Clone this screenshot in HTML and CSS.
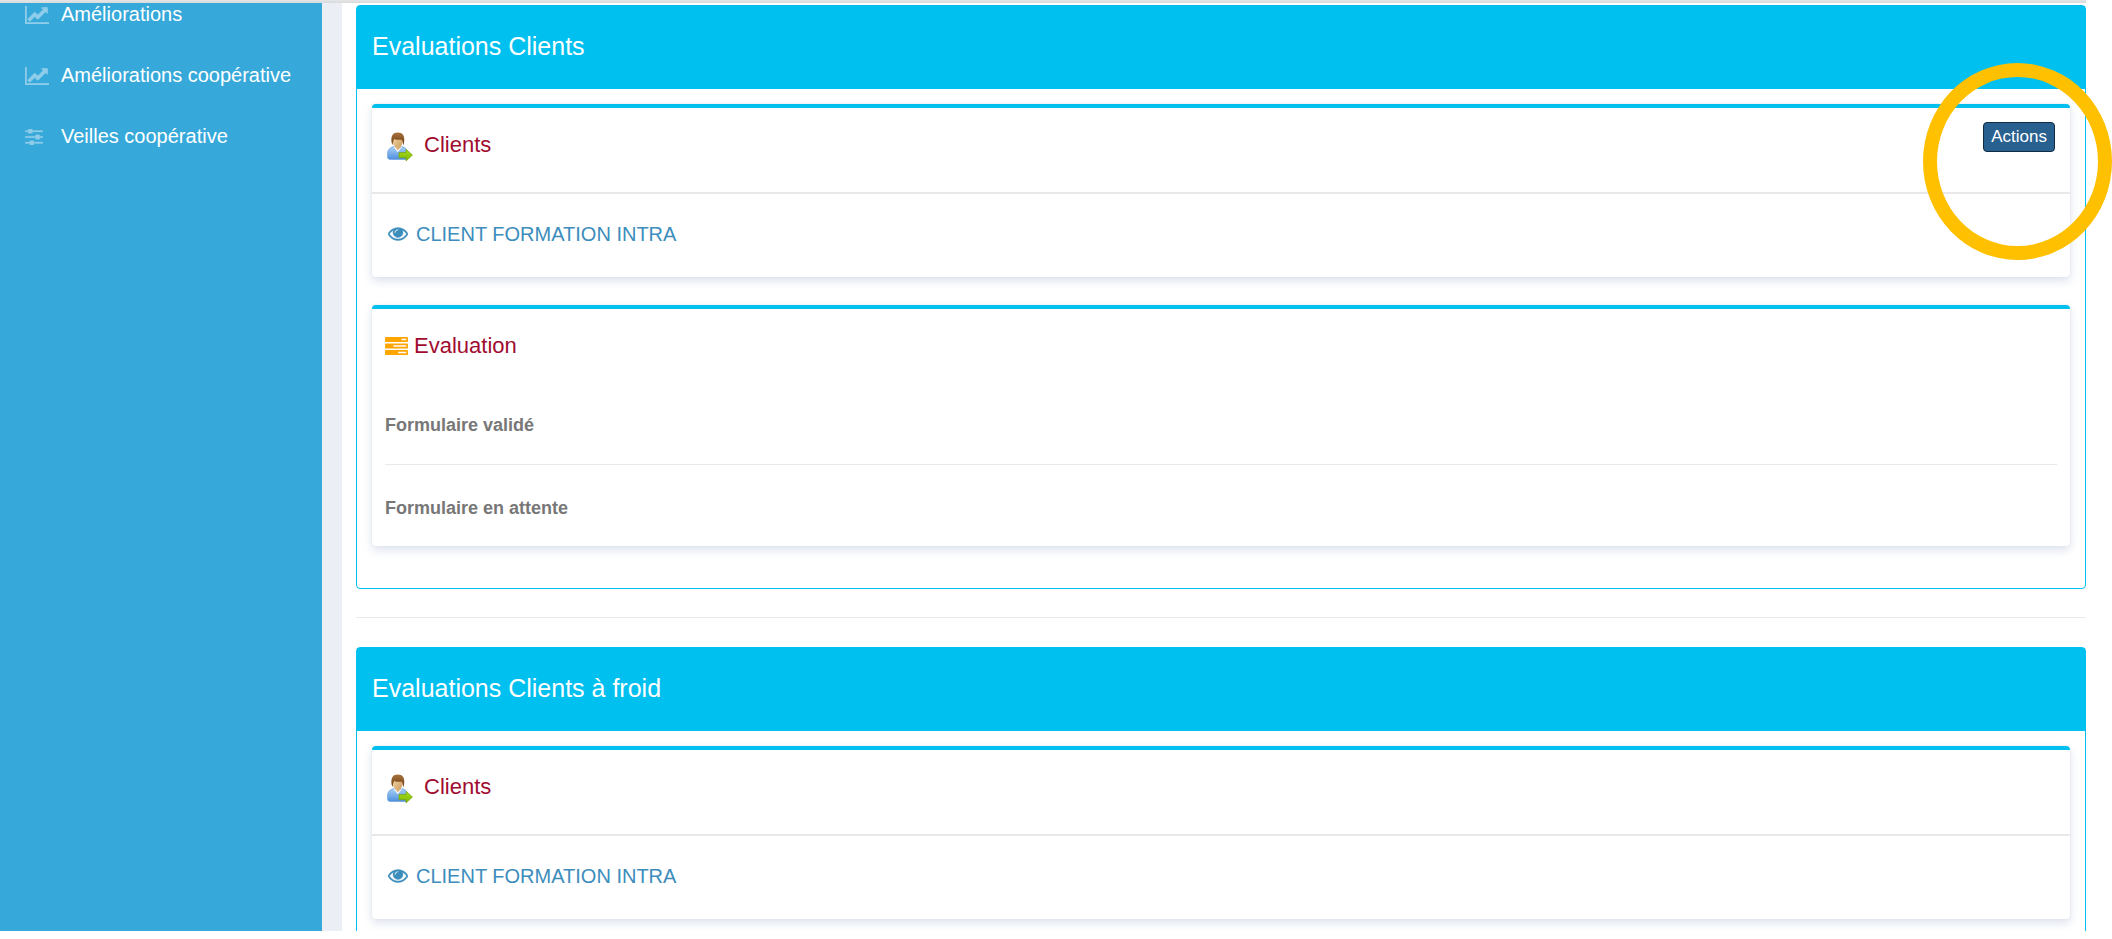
FILE: index.html
```
<!DOCTYPE html>
<html lang="fr">

<head>
    <title>Evaluations Clients</title>
    <meta charset="UTF-8">
    <meta name="viewport" content="width=device-width, initial-scale=1">

    <link rel="stylesheet" href="styles.css">
</head>

<body>
    <!-- Shared icons -->
    <svg class="sprite" aria-hidden="true">
        <defs>
            <linearGradient id="hair" x1="0" y1="0" x2="0" y2="1">
                <stop offset="0" stop-color="#a8713c" />
                <stop offset="1" stop-color="#6b3d12" />
            </linearGradient>
            <linearGradient id="skin" x1="0" y1="0" x2="1" y2="1">
                <stop offset="0" stop-color="#f6dcae" />
                <stop offset="1" stop-color="#c99a5c" />
            </linearGradient>
            <linearGradient id="shirt" x1="0" y1="0" x2="0" y2="1">
                <stop offset="0" stop-color="#a9d0f7" />
                <stop offset="1" stop-color="#4f8fdc" />
            </linearGradient>
            <linearGradient id="arrow" x1="0" y1="0" x2="0" y2="1">
                <stop offset="0" stop-color="#a6dc1e" />
                <stop offset="1" stop-color="#7fb800" />
            </linearGradient>
        </defs>
        <symbol id="icon-chart" viewBox="0 128 2048 1536">
            <path stroke="currentColor" stroke-width="50" d="M2048 1536v128h-2048v-1536h128v1408h1920zM1920 288v435q0 21-19.500 29.500t-35.500-7.500l-121-121-633 633q-10 10-23 10t-23-10l-233-233-416 416-192-192 585-585q10-10 23-10t23 10l233 233 464-464-121-121q-16-16-7.500-35.500t29.500-19.500h435q14 0 23 9t9 23z" />
        </symbol>
        <symbol id="icon-sliders" viewBox="0 256 1536 1408">
            <path stroke="currentColor" stroke-width="30" d="M352 1408v128h-352v-128h352zm352-128q26 0 45 19t19 45v256q0 26-19 45t-45 19h-256q-26 0-45-19t-19-45v-256q0-26 19-45t45-19h256zm160-384v128h-864v-128h864zm-640-512v128h-224v-128h224zm1312 1024v128h-736v-128h736zm-960-1152q26 0 45 19t19 45v256q0 26-19 45t-45 19h-256q-26 0-45-19t-19-45v-256q0-26 19-45t45-19h256zm640 512q26 0 45 19t19 45v256q0 26-19 45t-45 19h-256q-26 0-45-19t-19-45v-256q0-26 19-45t45-19h256zm320 128v128h-224v-128h224zm0-512v128h-864v-128h864z" />
        </symbol>
        <symbol id="icon-eye" viewBox="0 384 1792 1152">
            <path stroke="currentColor" stroke-width="36" d="M1664 960q-152-236-381-353 61 104 61 225 0 185-131.500 316.500t-316.500 131.500-316.500-131.500-131.500-316.500q0-121 61-225-229 117-381 353 133 205 333.500 326.500t434.500 121.500 434.500-121.500 333.500-326.500zm-720-384q0-20-14-34t-34-14q-125 0-214.500 89.500t-89.500 214.500q0 20 14 34t34 14 34-14 14-34q0-86 61-147t147-61q20 0 34-14t14-34zm848 384q0 34-20 69-140 230-376.500 368.500t-499.500 138.500-499.500-139-376.500-368q-20-35-20-69t20-69q140-229 376.500-368t499.500-139 499.500 139 376.500 368q20 35 20 69z" />
        </symbol>
        <symbol id="icon-tasks" viewBox="0 128 1792 1408">
            <path d="M1024 1408h640v-128h-640v128zm-384-512h1024v-128h-1024v128zm640-512h384v-128h-384v128zm512 832v256q0 26-19 45t-45 19h-1664q-26 0-45-19t-19-45v-256q0-26 19-45t45-19h1664q26 0 45 19t19 45zm0-512v256q0 26-19 45t-45 19h-1664q-26 0-45-19t-19-45v-256q0-26 19-45t45-19h1664q26 0 45 19t19 45zm0-512v256q0 26-19 45t-45 19h-1664q-26 0-45-19t-19-45v-256q0-26 19-45t45-19h1664q26 0 45 19t19 45z" />
        </symbol>
        <symbol id="icon-client" viewBox="0 -4 26 34">
            <path fill="url(#shirt)" stroke="#5b96dc" stroke-width=".6" d="M.6 25v-3.500c0-4 2.600-6.200 6.400-6.900h7.500c4 .7 6.200 3 6.200 6.900V25c0 1.600-.9 2.400-2.500 2.400H3.200C1.500 27.400.6 26.600.6 25z" />
            <path fill="#fff" d="M6.500 14.800l4.300 5.400 4.200-5.400z" />
            <path fill="url(#skin)" d="M8 12h5.600v3.200l-2.800 3.400L8 15.200z" />
            <ellipse fill="url(#skin)" cx="10.700" cy="9.200" rx="5" ry="6.500" />
            <path fill="url(#hair)" d="M4.600 10.500C3.700 3.500 6 .5 10.800.5s7.300 3 6.300 10l-.9 3c-.2-3-.6-4.700-1.600-5.800-2.800.3-5.500 0-7.300-.8-1 1.200-1.600 3.800-1.700 6.400z" />
            <path fill="url(#arrow)" stroke="#6fa000" stroke-width=".6" stroke-linejoin="round" d="M12 20.500h7v-3.200l6.500 5.700-6.500 6v-3.200h-7z" />
        </symbol>
    </svg>

    <div class="page">
        <aside class="sidebar">
            <ul class="menu">
                <li><a href="#"><svg class="icon-chart"><use href="#icon-chart" /></svg>Améliorations</a></li>
                <li><a href="#"><svg class="icon-chart"><use href="#icon-chart" /></svg>Améliorations coopérative</a></li>
                <li><a href="#"><svg class="icon-sliders"><use href="#icon-sliders" /></svg>Veilles coopérative</a></li>
            </ul>
        </aside>

        <main class="content">
            <section class="panel">
                <h2 class="panel-heading">Evaluations Clients</h2>
                <div class="panel-body">
                    <div class="box">
                        <div class="box-header">
                            <h3 class="box-title client-title"><svg class="icon-client"><use href="#icon-client" /></svg>Clients</h3>
                            <div class="box-tools">
                                <button type="button" class="btn">Actions</button>
                                <span class="highlight"></span>
                            </div>
                        </div>
                        <div class="box-body">
                            <a class="client-link" href="#"><svg class="icon-eye"><use href="#icon-eye" /></svg>CLIENT FORMATION INTRA</a>
                        </div>
                    </div>

                    <div class="box evaluation">
                        <h3 class="box-title"><svg class="icon-tasks"><use href="#icon-tasks" /></svg>Evaluation</h3>
                        <h4 class="status">Formulaire validé</h4>
                        <hr class="status-line">
                        <h4 class="status">Formulaire en attente</h4>
                    </div>
                </div>
            </section>

            <hr class="separator">

            <section class="panel">
                <h2 class="panel-heading">Evaluations Clients à froid</h2>
                <div class="panel-body">
                    <div class="box">
                        <div class="box-header">
                            <h3 class="box-title client-title"><svg class="icon-client"><use href="#icon-client" /></svg>Clients</h3>
                        </div>
                        <div class="box-body">
                            <a class="client-link" href="#"><svg class="icon-eye"><use href="#icon-eye" /></svg>CLIENT FORMATION INTRA</a>
                        </div>
                    </div>
                </div>
            </section>
        </main>
    </div>
</body>

</html>
```
FILE: styles.css
```
* {
    box-sizing: border-box;
}

body {
    font-family: "Liberation Sans", Arial, sans-serif;
    margin: 0;
    background-color: #fff;
}

h2,
h3,
h4 {
    margin: 0;
    font-weight: normal;
}

a {
    text-decoration: none;
}

hr {
    height: 1px;
    border: none;
    background-color: #e9e9e9;
}

svg {
    flex: none;
    fill: currentColor;
}

.sprite {
    position: absolute;
    width: 0;
    height: 0;
}

/* Page */
.page {
    display: flex;
    height: calc(100vh - 8px);
    padding-right: 26px;
    overflow: hidden;
    background: linear-gradient(#e4e5e7, #d9dadc) no-repeat left top / calc(100% - 26px) 3px;
}

.sidebar {
    flex: 0 0 322px;
    margin-top: 3px;
    background-color: #36a9da;
}

.menu {
    display: flex;
    flex-direction: column;
    gap: 40px;
    margin: 0;
    padding: 1px 0 0 25px;
    list-style: none;
}

.menu a {
    display: flex;
    align-items: center;
    gap: 12px;
    color: #fff;
    font-size: 20px;
    line-height: 21px;
}

.menu svg {
    color: #8fcdea;
}

.icon-chart {
    width: 24px;
    height: 18px;
}

.icon-sliders {
    width: 18px;
    height: 16px;
    margin-right: 6px;
}

.content {
    flex: 1;
    min-width: 0;
    margin-top: 3px;
    padding: 2px 0 0 14px;
    border-left: 20px solid #ebeef4;
}

/* Panels */
.panel {
    border: 1px solid #00c0ef;
    border-radius: 4px;
}

.panel-heading {
    padding: 26px 15px 29px;
    background-color: #00c0ef;
    color: #fff;
    font-size: 25px;
    line-height: 28px;
}

.panel-body {
    padding: 15px 15px 14px;
}

.separator {
    margin: 28px 0 29px;
}

/* Boxes */
.box {
    margin-bottom: 28px;
    border-top: 4px solid #00c0ef;
    border-radius: 4px;
    background-color: #fff;
    box-shadow: 0 0 2px #dde1ea, 0 4px 10px rgba(80, 110, 160, 0.2);
}

.box-header {
    display: flex;
    justify-content: space-between;
    align-items: flex-start;
    min-height: 86px;
    padding: 0 15px;
    border-bottom: 2px solid #e8e8e8;
}

.box-title {
    display: flex;
    align-items: center;
    gap: 6px;
    height: 51px;
    padding-top: 23px;
    color: #a00c30;
    font-size: 22px;
    line-height: 28px;
}

.client-title {
    gap: 11px;
}

.icon-client {
    width: 26px;
    height: 34px;
}

.icon-tasks {
    width: 23px;
    height: 18px;
    color: #ffa500;
}

.box-tools {
    position: relative;
    padding-top: 14px;
}

.btn {
    display: block;
    height: 30px;
    padding: 0 7px;
    border: 1px solid #122b40;
    border-radius: 4px;
    background-color: #286090;
    color: #fff;
    font-family: inherit;
    font-size: 17px;
    line-height: 26px;
    cursor: pointer;
}

/* Ring drawn around the button */
.highlight {
    position: absolute;
    top: -45px;
    right: -57px;
    width: 189px;
    height: 197px;
    border: 14px solid #ffc000;
    border-radius: 50%;
    pointer-events: none;
}

.box-body {
    padding: 26px 16px 29px;
}

.client-link {
    display: flex;
    align-items: center;
    gap: 8px;
    color: #3c8dbc;
    font-size: 20px;
    line-height: 28px;
}

.icon-eye {
    width: 20px;
    height: 14px;
}

.evaluation {
    padding: 0 13px 25px;
}

.status {
    color: #777;
    font-size: 18px;
    font-weight: bold;
    line-height: 26px;
}

.box-title + .status {
    margin-top: 52px;
}

.status-line {
    margin: 26px 0 30px;
}
```
